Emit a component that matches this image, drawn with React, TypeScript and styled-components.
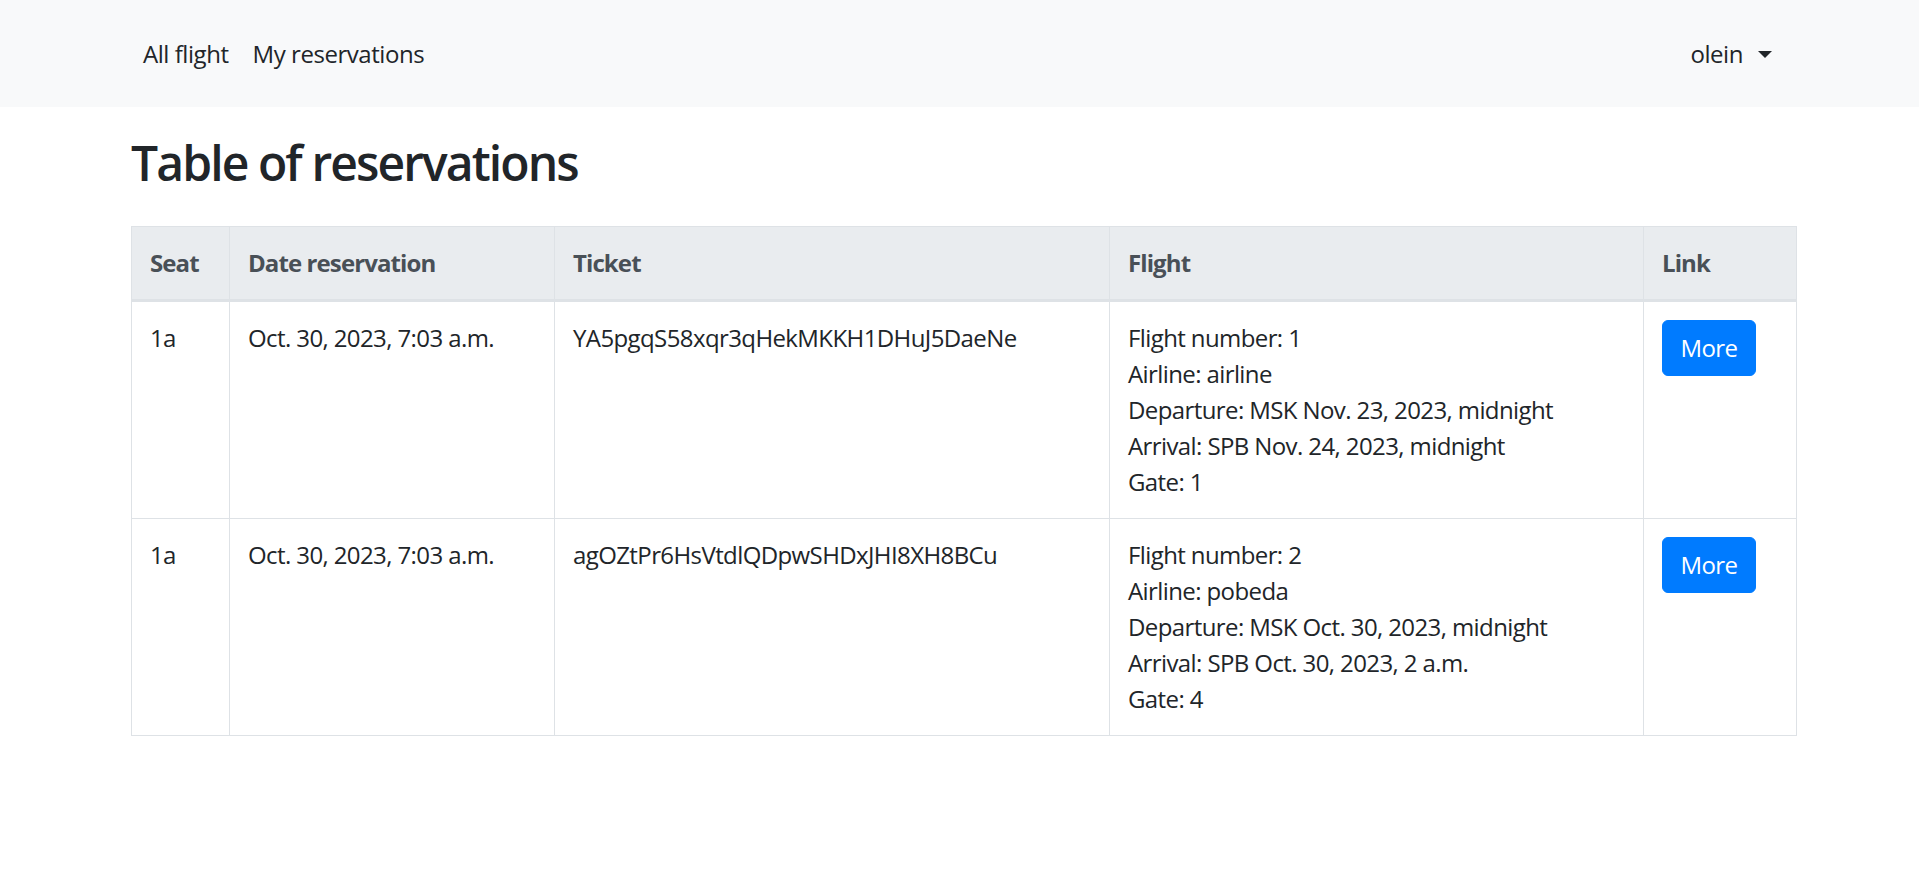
import React from "react";
import styled, { createGlobalStyle } from "styled-components";

const GlobalStyle = createGlobalStyle`
  html, body {
    margin: 0;
    padding: 0;
    background: #ffffff;
  }
  body {
    font-family: "Open Sans", "Noto Sans", "Liberation Sans", sans-serif;
    font-size: 24px;
    line-height: 36px;
    color: #212529;
  }
  * { box-sizing: border-box; }
`;

const NavBar = styled.nav`
  height: 107px;
  background: #f8f9fa;
  display: flex;
  align-items: center;
  justify-content: space-between;
  padding: 0 135px 0 131px;
`;

const NavGroup = styled.div`
  display: flex;
  align-items: center;
`;

const NavLink = styled.a`
  display: flex;
  align-items: center;
  padding: 12px 12px;
  color: #212529;
  text-decoration: none;
  font-size: 24px;
  line-height: 36px;
  letter-spacing: -0.45px;
  cursor: pointer;
`;

const Caret = styled.span`
  display: inline-block;
  margin-left: 15px;
  width: 0;
  height: 0;
  border-top: 7px solid #212529;
  border-left: 7px solid transparent;
  border-right: 7px solid transparent;
  margin-top: 2px;
`;

const Main = styled.main`
  padding: 0 123px 0 131px;
`;

const Title = styled.h2`
  margin: 27px 0 35px 0;
  font-size: 48px;
  line-height: 57px;
  font-weight: 600;
  letter-spacing: -1.9px;
  color: #212529;
`;

const Table = styled.table`
  width: 1665px;
  table-layout: fixed;
  border-collapse: collapse;
  color: #212529;
`;

const HeadCell = styled.th`
  background: #e9ecef;
  color: #495057;
  font-weight: 700;
  text-align: left;
  vertical-align: bottom;
  padding: 18px 18px;
  border: 1px solid #dee2e6;
  border-bottom: 3px solid #dee2e6;
  line-height: 36px;
  letter-spacing: -0.9px;
`;

const Cell = styled.td`
  vertical-align: top;
  padding: 18px 18px;
  border: 1px solid #dee2e6;
  line-height: 36px;
  letter-spacing: -0.6px;
`;

const Line = styled.div`
  white-space: nowrap;
`;

const MoreButton = styled.button`
  display: inline-block;
  font-family: inherit;
  font-size: 24px;
  line-height: 36px;
  letter-spacing: -0.55px;
  color: #ffffff;
  background: #007bff;
  border: 1px solid #007bff;
  border-radius: 6px;
  padding: 9px 17px;
  height: 56px;
  width: 94px;
  cursor: pointer;
`;

type Reservation = {
  seat: string;
  date: string;
  ticket: string;
  number: string;
  airline: string;
  departure: string;
  arrival: string;
  gate: string;
};

const reservations: Reservation[] = [
  {
    seat: "1a",
    date: "Oct. 30, 2023, 7:03 a.m.",
    ticket: "YA5pgqS58xqr3qHekMKKH1DHuJ5DaeNe",
    number: "1",
    airline: "airline",
    departure: "MSK Nov. 23, 2023, midnight",
    arrival: "SPB Nov. 24, 2023, midnight",
    gate: "1",
  },
  {
    seat: "1a",
    date: "Oct. 30, 2023, 7:03 a.m.",
    ticket: "agOZtPr6HsVtdlQDpwSHDxJHI8XH8BCu",
    number: "2",
    airline: "pobeda",
    departure: "MSK Oct. 30, 2023, midnight",
    arrival: "SPB Oct. 30, 2023, 2 a.m.",
    gate: "4",
  },
];

const columns = [
  { label: "Seat", width: 98 },
  { label: "Date reservation", width: 325 },
  { label: "Ticket", width: 555 },
  { label: "Flight", width: 534 },
  { label: "Link", width: 153 },
];

export default function App() {
  return (
    <>
      <GlobalStyle />
      <NavBar>
        <NavGroup>
          <NavLink>All flight</NavLink>
          <NavLink>My reservations</NavLink>
        </NavGroup>
        <NavGroup>
          <NavLink>
            olein
            <Caret />
          </NavLink>
        </NavGroup>
      </NavBar>
      <Main>
        <Title>Table of reservations</Title>
        <Table>
          <colgroup>
            {columns.map((c) => (
              <col key={c.label} style={{ width: c.width }} />
            ))}
          </colgroup>
          <thead>
            <tr>
              {columns.map((c) => (
                <HeadCell key={c.label}>{c.label}</HeadCell>
              ))}
            </tr>
          </thead>
          <tbody>
            {reservations.map((r) => (
              <tr key={r.ticket}>
                <Cell>{r.seat}</Cell>
                <Cell>{r.date}</Cell>
                <Cell>{r.ticket}</Cell>
                <Cell>
                  <Line>Flight number: {r.number}</Line>
                  <Line>Airline: {r.airline}</Line>
                  <Line>Departure: {r.departure}</Line>
                  <Line>Arrival: {r.arrival}</Line>
                  <Line>Gate: {r.gate}</Line>
                </Cell>
                <Cell>
                  <MoreButton>More</MoreButton>
                </Cell>
              </tr>
            ))}
          </tbody>
        </Table>
      </Main>
    </>
  );
}
